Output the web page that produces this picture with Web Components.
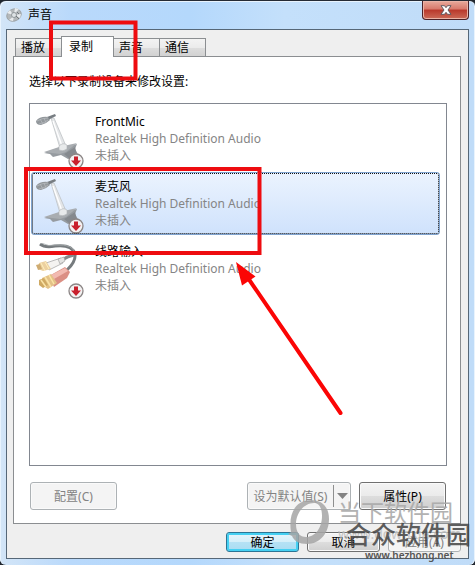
<!DOCTYPE html>
<html lang="zh-CN">
<head>
<meta charset="utf-8">
<title>声音</title>
<style>
body{
    margin:0;
    background:#20262e;
    font:12px/17px "Noto Sans","Noto Sans CJK SC",sans-serif;
    color:#000;
}
</style>
</head>
<body>
<sound-window heading="声音">
    <tab-strip slot="tabs">
        <tab-button>播放</tab-button>
        <tab-button active>录制</tab-button>
        <tab-button>声音</tab-button>
        <tab-button>通信</tab-button>
    </tab-strip>
    <device-panel>
        <device-item icon="mic" name="FrontMic" driver="Realtek High Definition Audio" state="未插入"></device-item>
        <device-item icon="mic" name="麦克风" driver="Realtek High Definition Audio" state="未插入" selected></device-item>
        <device-item icon="line" name="线路输入" driver="Realtek High Definition Audio" state="未插入"></device-item>
        <push-button slot="left" size="large" disabled>配置(C)</push-button>
        <push-button slot="right" size="split" disabled>设为默认值(S)</push-button>
        <push-button slot="right" size="large">属性(P)</push-button>
    </device-panel>
    <push-button slot="actions" primary>确定</push-button>
    <push-button slot="actions">取消</push-button>
    <push-button slot="actions" disabled>应用(A)</push-button>
</sound-window>
<mark-up></mark-up>
<water-mark></water-mark>

<script>
const badge=`
<circle cx="41" cy="48" r="7" fill="#f3f1f1" stroke="#8b8585" stroke-width="1.3"/>
<path d="M39 43.500h4v4h3L41 53l-5-5.500h3z" fill="#c9202c"/>
`
const icons={
    mic:`
<svg width="52" height="56" viewBox="0 0 52 56" aria-hidden="true">
    <path d="M9 40l14-5 19-4-2 5 4 7-7 2-4 1-7-4-8 2-3-3z" fill="#969ba0"/>
    <path d="M9 39l15-5 18-4-11 9-6 2z" fill="#a9adb1"/>
    <path d="M31 40l9-6 2 8-7 4-6-5z" fill="#85898e"/>
    <path d="M16 5h3l12 28-6 2z" fill="#e4e6e8" stroke="#b7bbbf" stroke-width=".7"/>
    <path d="M18 8l9 25" stroke="#fff" stroke-width="1.3"/>
    <path d="M24 33q4-4 8-1v4q-4 3-8 1z" fill="#e8eaeb" stroke="#b0b4b7" stroke-width=".6"/>
    <path d="M12 4l8-3 1 2-8 4z" fill="#777d82"/>
    <path d="M1 8q4-5 12-4l2 3q-4 4-9 5-5 0-5-4z" fill="#92979b"/>
    <path d="M2 8q5-3 11-3M4 11q6-1 9-4M5 6l3 5M9 5l2 5" stroke="#b5b9bc" stroke-width=".8" fill="none"/>
    ${badge}
</svg>`,
    line:`
<svg width="52" height="56" viewBox="0 0 52 56" aria-hidden="true">
    <path d="M5 1q5 4 15 2 17-2 20 8 1 8-8 16" fill="none" stroke="#767b7e" stroke-width="3"/>
    <path d="M6 0q8 4 15 2 17-1 19 8" fill="none" stroke="#abb0b1" stroke-width=".8"/>
    <path d="M27 17q6-4 12-5" fill="none" stroke="#85898b" stroke-width="3"/>
    <path d="M11 20l15-5 2 5-14 7z" fill="#f4f3f1" stroke="#aaa" stroke-width=".8"/>
    <path d="M23 16l6-2 1 4-5 3z" fill="#e3e3e1" stroke="#999" stroke-width=".6"/>
    <path d="M4 20l7-2 5 8-8 2-5-2z" fill="#ecd0a0"/>
    <path d="M1 22l4-1 2 5-4 1z" fill="#cfac72"/>
    <path d="M6 20l4 8M10 19l4 7" stroke="#fff0bd" stroke-width="1"/>
    <path d="M14 33l16-9 5 5-3 6-13 9z" fill="#db8f84"/>
    <path d="M16 32l14-7 3 3-14 8z" fill="#f2bab1"/>
    <path d="M7 35l9-4 6 9-9 6-6-4z" fill="#e3c288"/>
    <path d="M4 37l5-2 4 7-5 3-4-3z" fill="#cfa963"/>
    <path d="M6 37l5 7M10 34l6 10M14 32l5 9" stroke="#fae3a5" stroke-width="1.500"/>
    ${badge}
</svg>`
}

class SoundWindow extends HTMLElement{
    constructor(){
        super()
        this._shadowRoot=this.attachShadow({mode:'open'})
    }
    connectedCallback(){
        this._shadowRoot.innerHTML=`
            <style>
            :host{
                display:flex;
                flex-direction:column;
                box-sizing:border-box;
                min-height:100vh;
                padding:0 6px 6px;
                border-top:1px solid #252b35;
                border-radius:6px;
                background:linear-gradient(90deg,#d3e5f7,#b9d9fb 15%,#b4d8fc 40%,#c4e0fb 60%,#c0dcf8);
                box-shadow:inset 1px 1px 0 #e8f3fd,inset -1px 0 0 #e8f3fd;
            }
            header{
                display:flex;
                justify-content:space-between;
                align-items:flex-start;
                height:28px;
            }
            h1{
                display:flex;
                align-items:center;
                gap:6px;
                margin:0;
                padding-top:5px;
                font-size:12px;
                line-height:18px;
                font-weight:normal;
            }
            .close{
                display:flex;
                justify-content:center;
                align-items:center;
                width:47px;
                height:19px;
                padding:0;
                border:1px solid #4b2228;
                border-top:0;
                border-radius:0 0 4px 4px;
                background:linear-gradient(#e8aa9c,#d8796b 45%,#b9382b 50%,#cc6b58);
                box-shadow:inset 0 0 0 1px #eab3a6;
            }
            main{
                flex:1;
                display:flex;
                flex-direction:column;
                padding:7px 7px 6px 6px;
                border:1px solid #566777;
                background:#efefef;
            }
            footer{
                display:flex;
                justify-content:flex-end;
                gap:8px;
                padding-top:8px;
            }
            </style>
            <header>
                <h1>
                    <svg width="16" height="16" viewBox="0 0 16 16" aria-hidden="true">
                        <ellipse cx="8" cy="8" rx="7.500" ry="6" transform="rotate(-25 8 8)" fill="#b4b8ba" stroke="#999fa3" stroke-width=".8"/>
                        <path d="M7 8L1 6l3-3zM8 7l1-6 4 1zM8 9l-1 5-4-1zM9 8l6-1-1 4z" fill="#e9ecee"/>
                        <circle cx="8" cy="8" r="2.500" fill="#dfe3e5" stroke="#83898d" stroke-width=".8"/>
                        <path d="M10 9l3 3M11 5l2 2" stroke="#73797d"/>
                    </svg>
                    ${this.getAttribute('heading')}
                </h1>
                <button class="close" aria-label="关闭">
                    <svg width="12" height="10" viewBox="0 0 12 10" aria-hidden="true">
                        <path d="M1 .7h3.500L6 2.700 7.500.7H11L8 5l3 4.300H7.500L6 7.300 4.500 9.300H1L4 5z" fill="#fff" stroke="#54535c" stroke-width=".9"/>
                    </svg>
                </button>
            </header>
            <main>
                <slot name="tabs"></slot>
                <slot></slot>
                <footer><slot name="actions"></slot></footer>
            </main>
        `
    }
}
window.customElements.define('sound-window',SoundWindow)

class TabStrip extends HTMLElement{
    constructor(){
        super()
        this._shadowRoot=this.attachShadow({mode:'open'})
    }
    connectedCallback(){
        this.setAttribute('role','tablist')
        this._shadowRoot.innerHTML=`
            <style>
            :host{
                display:flex;
                align-items:flex-end;
                height:19px;
                padding-left:2px;
            }
            </style>
            <slot></slot>
        `
    }
}
window.customElements.define('tab-strip',TabStrip)

class TabButton extends HTMLElement{
    constructor(){
        super()
        this._shadowRoot=this.attachShadow({mode:'open'})
    }
    connectedCallback(){
        this._shadowRoot.innerHTML=`
            <style>
            :host{
                display:block;
                margin-right:-1px;
            }
            :host([active]){
                z-index:1;
                margin-bottom:-1px;
            }
            button{
                display:block;
                width:47px;
                height:18px;
                padding:0 0 0 5px;
                border:1px solid #8b8e91;
                border-bottom:0;
                background:linear-gradient(#f3f3f3,#ebebeb 50%,#dddddd 52%,#d2d2d2);
                font:inherit;
                color:inherit;
                text-align:left;
            }
            :host([active]) button{
                width:53px;
                height:21px;
                padding:0 0 2px 7px;
                background:#fff;
            }
            </style>
            <button role="tab" aria-selected="${this.hasAttribute('active')}"><slot></slot></button>
        `
    }
}
window.customElements.define('tab-button',TabButton)

class DevicePanel extends HTMLElement{
    constructor(){
        super()
        this._shadowRoot=this.attachShadow({mode:'open'})
    }
    connectedCallback(){
        this._shadowRoot.innerHTML=`
            <style>
            :host{
                flex:1;
                display:flex;
                flex-direction:column;
                padding:16px 13px 13px 15px;
                border:1px solid #8b8e91;
                background:#fff;
            }
            p{
                margin:0 0 13px;
            }
            .list{
                flex:1;
                display:flex;
                flex-direction:column;
                gap:2px;
                padding:3px 6px 3px 1px;
                border:1px solid #828790;
            }
            .row{
                display:flex;
                justify-content:space-between;
                padding:16px 1px 0 1px;
            }
            .group{
                display:flex;
                gap:8px;
            }
            </style>
            <p>选择以下录制设备来修改设置:</p>
            <div class="list"><slot></slot></div>
            <div class="row">
                <slot name="left"></slot>
                <div class="group"><slot name="right"></slot></div>
            </div>
        `
    }
}
window.customElements.define('device-panel',DevicePanel)

class DeviceItem extends HTMLElement{
    constructor(){
        super()
        this._shadowRoot=this.attachShadow({mode:'open'})
    }
    connectedCallback(){
        this._shadowRoot.innerHTML=`
            <style>
            :host{
                display:block;
            }
            button{
                display:flex;
                align-items:flex-start;
                gap:8px;
                width:100%;
                height:63px;
                padding:5px 3px 0;
                border:1px solid transparent;
                border-radius:3px;
                background:none;
                font:inherit;
                color:#858585;
                text-align:left;
            }
            :host([selected]) button{
                border-color:#7fa3cf;
                background:linear-gradient(#ebf3fe,#cfe2fc);
                outline:1px dotted #111;
                outline-offset:-2px;
            }
            .text{
                display:flex;
                flex-direction:column;
            }
            .name{
                color:#000;
            }
            </style>
            <button aria-pressed="${this.hasAttribute('selected')}">
                ${icons[this.getAttribute('icon')]}
                <span class="text">
                    <span class="name">${this.getAttribute('name')}</span>
                    <span>${this.getAttribute('driver')}</span>
                    <span>${this.getAttribute('state')}</span>
                </span>
            </button>
        `
    }
}
window.customElements.define('device-item',DeviceItem)

class PushButton extends HTMLElement{
    constructor(){
        super()
        this._shadowRoot=this.attachShadow({mode:'open'})
    }
    connectedCallback(){
        const split=this.getAttribute('size')==='split'
        const off=this.hasAttribute('disabled')?'disabled':''
        this._shadowRoot.innerHTML=`
            <style>
            :host{
                display:flex;
                box-sizing:border-box;
                width:73px;
                height:20px;
                border:1px solid #707070;
                border-radius:3px;
                background:linear-gradient(#f3f3f3,#ebebeb 49%,#dddddd 51%,#cfcfcf);
                box-shadow:inset 0 0 0 1px #fafafa;
            }
            :host([size]){
                width:87px;
                height:28px;
            }
            :host([size=split]){
                width:104px;
            }
            :host([primary]){
                border-color:#2c7595;
                background:linear-gradient(#e8f5fb,#d5eff9 49%,#b5e2f5 51%,#a9dcf2);
                box-shadow:inset 0 0 0 2px #45d0f2;
            }
            :host([disabled]){
                border-color:#adb2b5;
                background:#f4f4f4;
                color:#838383;
            }
            button{
                flex:1;
                padding:0;
                border:0;
                background:none;
                font:inherit;
                color:inherit;
                white-space:nowrap;
            }
            .arrow{
                flex:none;
                display:flex;
                align-items:center;
                justify-content:center;
                width:17px;
                margin:2px 0;
                border-left:1px solid #8e8f8f;
            }
            </style>
            <button ${off}><slot></slot></button>
            ${split?`<button class="arrow" aria-label="更多" ${off}>
                <svg width="11" height="6" viewBox="0 0 11 6" aria-hidden="true"><path d="M0 0h11L5.500 6z" fill="#838383"/></svg>
            </button>`:''}
        `
    }
}
window.customElements.define('push-button',PushButton)

// red frames and arrow drawn over the window
class MarkUp extends HTMLElement{
    constructor(){
        super()
        this._shadowRoot=this.attachShadow({mode:'open'})
    }
    connectedCallback(){
        this._shadowRoot.innerHTML=`
            <style>
            :host{
                position:absolute;
                top:0;
                left:0;
                z-index:2;
                pointer-events:none;
            }
            svg{
                display:block;
            }
            </style>
            <svg width="350" height="420" viewBox="0 0 350 420" aria-hidden="true">
                <g fill="none" stroke="#ee0c10" stroke-width="4">
                    <rect x="51" y="22.500" width="84.500" height="56"/>
                    <rect x="26" y="169" width="233.500" height="84"/>
                    <path d="M248 278L340.500 413" stroke="#fb0505" stroke-linecap="round"/>
                </g>
                <path d="M236 262l19.500 14.500-13.500 9z" fill="#fb0505"/>
            </svg>
        `
    }
}
window.customElements.define('mark-up',MarkUp)

class WaterMark extends HTMLElement{
    constructor(){
        super()
        this._shadowRoot=this.attachShadow({mode:'open'})
    }
    connectedCallback(){
        this._shadowRoot.innerHTML=`
            <style>
            :host{
                position:absolute;
                right:4px;
                bottom:0;
                z-index:3;
                display:flex;
                align-items:flex-start;
                gap:8px;
                height:66px;
                pointer-events:none;
            }
            .text{
                display:grid;
                grid-template-rows:22px 26px 18px;
                width:133px;
            }
            .back,.site,.front,.url{
                grid-column:1;
                white-space:nowrap;
            }
            .back{
                grid-row:1;
                font-size:23px;
                line-height:26px;
                color:#aaa;
                opacity:.9;
            }
            .site{
                grid-row:2;
                padding-top:4px;
                font-size:14px;
                line-height:18px;
                color:#bbb;
                opacity:.8;
            }
            .front{
                grid-row:2;
                padding-left:8px;
                font-size:25px;
                line-height:26px;
                font-weight:500;
                color:#444;
                opacity:.85;
            }
            .url{
                grid-row:3;
                padding-left:27px;
                font-size:10px;
                line-height:16px;
                font-weight:600;
                color:#555;
            }
            </style>
            <svg width="42" height="46" viewBox="0 0 42 46" aria-hidden="true">
                <path fill-rule="evenodd" d="M23 1C34 1 41 8 41 20c0 14-9 25-22 25C11 45 6 42 4 37L0 35l3-2C0 14 8 1 23 1zM26 4C16 4 8 14 8 25c0 9 4 13 10 13 10 0 16-10 16-21 0-8-3-13-8-13z" fill="#a4a4a4" opacity=".85"/>
            </svg>
            <div class="text">
                <span class="back">当下软件园</span>
                <span class="site">www.downxia.com</span>
                <span class="front">合众软件园</span>
                <span class="url">www.hezhong.net</span>
            </div>
        `
    }
}
window.customElements.define('water-mark',WaterMark)
</script>
</body>
</html>
